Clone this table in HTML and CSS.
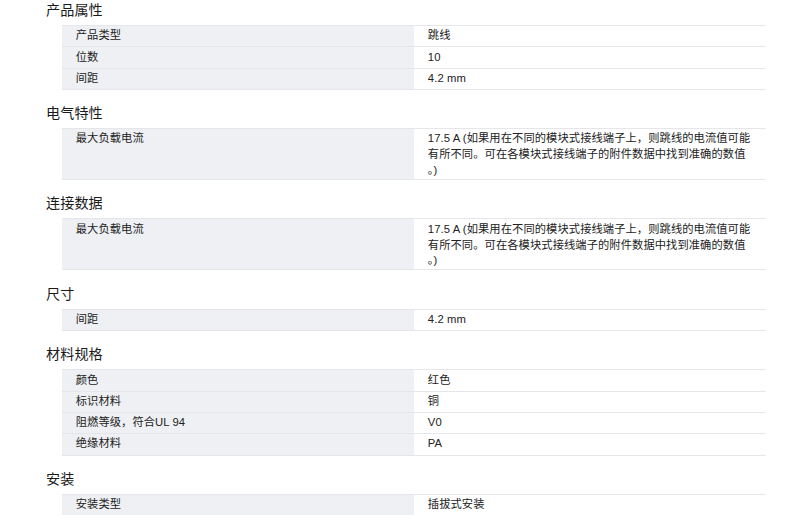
FILE: index.html
```html
<!DOCTYPE html>
<html lang="zh-CN">
<head>
<meta charset="utf-8">
<title>产品属性</title>
<link rel="stylesheet" href="styles.css">
</head>
<body>
<main class="page">
  <section class="group">
    <h2 class="group-title">产品属性</h2>
    <div class="table">
      <div class="row"><div class="cell label">产品类型</div><div class="cell value">跳线</div></div>
      <div class="row"><div class="cell label">位数</div><div class="cell value">10</div></div>
      <div class="row"><div class="cell label">间距</div><div class="cell value">4.2 mm</div></div>
    </div>
  </section>
  <section class="group">
    <h2 class="group-title">电气特性</h2>
    <div class="table">
      <div class="row"><div class="cell label">最大负载电流</div><div class="cell value wrap">17.5 A (如果用在不同的模块式接线端子上，则跳线的电流值可能有所不同。可在各模块式接线端子的附件数据中找到准确的数值。)</div></div>
    </div>
  </section>
  <section class="group">
    <h2 class="group-title">连接数据</h2>
    <div class="table">
      <div class="row"><div class="cell label">最大负载电流</div><div class="cell value wrap">17.5 A (如果用在不同的模块式接线端子上，则跳线的电流值可能有所不同。可在各模块式接线端子的附件数据中找到准确的数值。)</div></div>
    </div>
  </section>
  <section class="group">
    <h2 class="group-title">尺寸</h2>
    <div class="table">
      <div class="row"><div class="cell label">间距</div><div class="cell value">4.2 mm</div></div>
    </div>
  </section>
  <section class="group">
    <h2 class="group-title">材料规格</h2>
    <div class="table">
      <div class="row"><div class="cell label">颜色</div><div class="cell value">红色</div></div>
      <div class="row"><div class="cell label">标识材料</div><div class="cell value">铜</div></div>
      <div class="row"><div class="cell label">阻燃等级，符合UL 94</div><div class="cell value">V0</div></div>
      <div class="row"><div class="cell label">绝缘材料</div><div class="cell value">PA</div></div>
    </div>
  </section>
  <section class="group">
    <h2 class="group-title">安装</h2>
    <div class="table">
      <div class="row"><div class="cell label">安装类型</div><div class="cell value">插拔式安装</div></div>
    </div>
  </section>
</main>
</body>
</html>
```

FILE: styles.css
```css
* { box-sizing: border-box; }
html, body { margin: 0; padding: 0; background: #fff; }
body {
  font-family: "Liberation Sans", "Noto Sans CJK SC", sans-serif;
  color: #222;
}
.page {
  padding: 0 24px 0 46px;
  display: flex;
  flex-direction: column;
  gap: 13.3px;
}
.group-title {
  margin: 0 0 5px 0;
  font-size: 14.1px;
  line-height: 20px;
  font-weight: normal;
  color: #1a1a1a;
  letter-spacing: 0.1px;
}
.table {
  margin-left: 15.7px;
  width: 704.3px;
  border-bottom: 1px solid #e4e6e9;
}
.row {
  display: grid;
  grid-template-columns: 1fr 1fr;
  min-height: 21.33px;
  border-top: 1px solid #e4e6e9;
}
.cell {
  font-size: 11.28px;
  line-height: 15.9px;
  letter-spacing: 0.08px;
  padding: 2.2px 15px 0 14px;
}
.label { background: #eef0f3; color: #222; }
.value { background: #fff; }
.wrap { line-break: anywhere; }
```
